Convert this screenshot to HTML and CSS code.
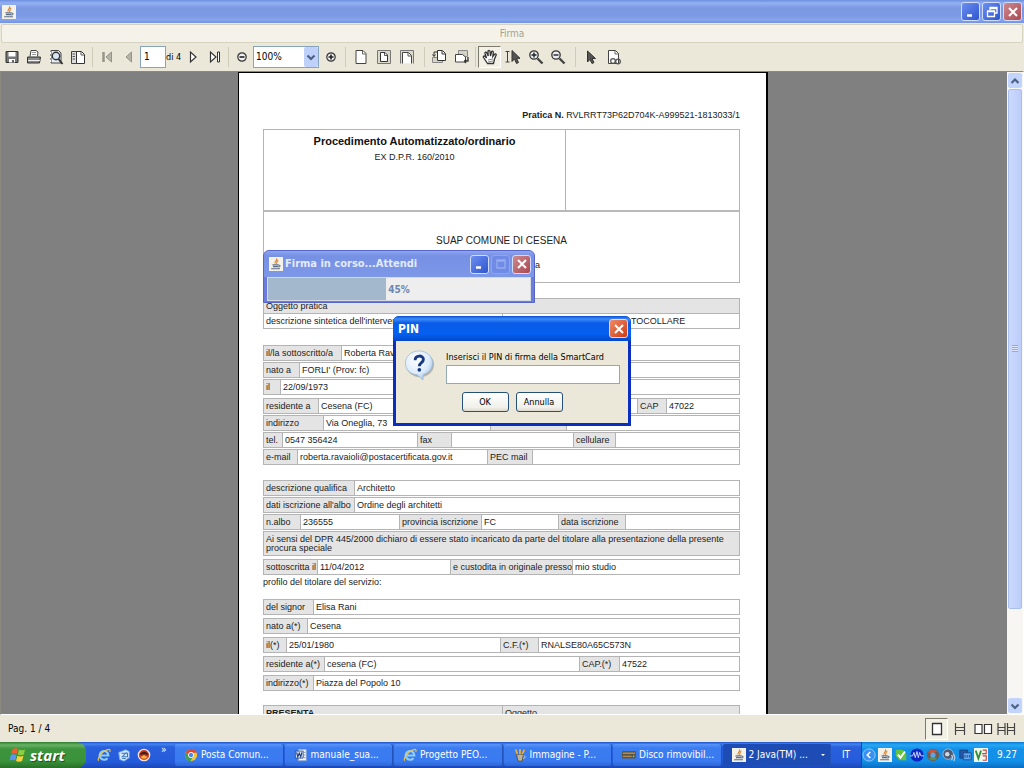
FILE: index.html
```html
<!DOCTYPE html>
<html lang="it">
<head>
<meta charset="utf-8">
<meta name="viewport" content="width=device-width, initial-scale=1">
<title>Firma</title>
<link rel="stylesheet" href="styles.css">
</head>
<body>
<svg class="defs" aria-hidden="true">
  <symbol id="java" viewBox="0 0 16 16"><rect width="16" height="16" fill="#f4f1e8"/><path d="M8.500 1.500C10 4 6 4.500 7 7.500M10.500 3.500C8.500 5 9.500 6 8.500 8" fill="none" stroke="#d98a3a" stroke-width="1.400"/><path d="M4 9h7M4.500 11h6M11 9.500c2.500-.5 2 2-.5 2M2.500 13.500h10" fill="none" stroke="#5d6d86" stroke-width="1.200"/></symbol>
  <symbol id="min" viewBox="0 0 16 16"><path d="M4 11.500h5" stroke="#fff" stroke-width="2.500"/></symbol>
  <symbol id="close" viewBox="0 0 16 16"><path d="M4 4l8 8M12 4l-8 8" stroke="#fff" stroke-width="2"/></symbol>
  <symbol id="up" viewBox="0 0 12 12"><path d="M2.500 8L6 4.500 9.500 8" fill="none" stroke="#4d6185" stroke-width="2.200"/></symbol>
  <symbol id="down" viewBox="0 0 12 12"><path d="M2.500 4.500L6 8l3.500-3.500" fill="none" stroke="#4d6185" stroke-width="2.200"/></symbol>
  <symbol id="ie" viewBox="0 0 16 16"><path d="M12 11.500A5 5 0 1 1 13 8.500H4.500" fill="none" stroke="#8fd0fb" stroke-width="2.400"/><path d="M2 14.500C-.5 12 7 2 14 1.500c1.500.5 1 2 .5 3" fill="none" stroke="#f2c84b" stroke-width="1.300"/></symbol>
</svg>
<div class="desktop">
  <header class="titlebar">
    <svg class="i14"><use href="#java"/></svg>
    <div class="winbtns">
      <button class="wb" aria-label="Riduci"><svg><use href="#min"/></svg></button>
      <button class="wb" aria-label="Ripristina"><svg viewBox="0 0 16 16"><path d="M6 6V3.500h7V9h-2.500M3.500 7h7v5.500h-7zM6 4.500h7M3.500 7.500h7" fill="none" stroke="#fff" stroke-width="1.300"/></svg></button>
      <button class="wb red" aria-label="Chiudi"><svg><use href="#close"/></svg></button>
    </div>
  </header>
  <div class="caption">Firma</div>
  <div class="toolbar">
    <button class="tb" aria-label="Salva"><svg viewBox="0 0 16 16"><path d="M2 2.500h12v11H2z" fill="#777" stroke="#333"/><path d="M4.500 3h7v4.500h-7zM5 10h6v3.500H5z" fill="#fff"/><path d="M9 11v2.500" stroke="#333" stroke-width="1.500"/></svg></button>
    <button class="tb" aria-label="Stampa"><svg viewBox="0 0 16 16"><path d="M4 7.500L5 1.500h5l2 1.500-.5 4.500" fill="#fff" stroke="#444"/><path d="M1.500 8h13l-1 6h-12z" fill="#8b8b8b" stroke="#333"/><path d="M2 11.500h12" stroke="#eee"/><path d="M6 3.500h4M6 5.500h4" stroke="#999"/></svg></button>
    <button class="tb" aria-label="Cerca"><svg viewBox="0 0 16 16"><path d="M3 1.500h7.500L13 4v10H3z" fill="#e7edf5" stroke="#444"/><circle cx="8" cy="7" r="3.700" fill="#d8e6f2" stroke="#333" stroke-width="1.400"/><path d="M10.500 10l4 5" stroke="#333" stroke-width="2"/><path d="M2.500 3v2M2.500 7v2M2.500 11v2" stroke="#fff"/></svg></button>
    <button class="tb" aria-label="Segnalibri"><svg viewBox="0 0 16 16"><path d="M1.500 2.500h5v12h-5z" fill="#ddd" stroke="#444"/><path d="M6.500 2.500h5l3 3v9h-8z" fill="#fff" stroke="#333"/><path d="M11 3v3h3M2.500 5h2.500M2.500 7.500h2.500M2.500 10h2.500" fill="none" stroke="#555"/></svg></button>
    <span class="sep"></span>
    <button class="tb" aria-label="Prima pagina"><svg viewBox="0 0 16 16"><path d="M4.500 3v10" stroke="#979488" stroke-width="2.500"/><path d="M12.500 3v10L7 8z" fill="#b6b3a7" stroke="#979488"/></svg></button>
    <button class="tb" aria-label="Pagina precedente"><svg viewBox="0 0 16 16"><path d="M10.500 3v10L5 8z" fill="#b6b3a7" stroke="#979488"/></svg></button>
    <input class="pageno" id="pageno" type="text" value="1"><label class="of" for="pageno">di 4</label>
    <button class="tb" aria-label="Pagina successiva"><svg viewBox="0 0 16 16"><path d="M5.500 3v10L11 8z" fill="#fff" stroke="#333" stroke-width="1.200"/></svg></button>
    <button class="tb" aria-label="Ultima pagina"><svg viewBox="0 0 16 16"><path d="M3.500 3v10L9 8z" fill="#fff" stroke="#333" stroke-width="1.200"/><path d="M10.500 3h2v10h-2z" fill="#fff" stroke="#333"/></svg></button>
    <span class="sep near"></span>
    <button class="tb" aria-label="Riduci zoom"><svg viewBox="0 0 16 16"><circle cx="8" cy="8" r="4.200" fill="#eee" stroke="#333" stroke-width="1.200"/><path d="M5.500 8h5" stroke="#222" stroke-width="1.600"/></svg></button>
    <span class="zoombox"><select aria-label="Zoom"><option>100%</option></select><span class="arrow"><svg><use href="#down"/></svg></span></span>
    <button class="tb w" aria-label="Aumenta zoom"><svg viewBox="0 0 16 16"><circle cx="8" cy="8" r="4.200" fill="#eee" stroke="#333" stroke-width="1.200"/><path d="M5.500 8h5M8 5.500v5" stroke="#222" stroke-width="1.600"/></svg></button>
    <span class="sep"></span>
    <button class="tb w" aria-label="Dimensione reale"><svg viewBox="0 0 16 16"><path d="M3 1.500h7L13 4.500v10H3z" fill="#fff" stroke="#444"/><path d="M9.500 2v3H13" fill="none" stroke="#666"/></svg></button>
    <button class="tb w" aria-label="Pagina intera"><svg viewBox="0 0 16 16"><path d="M1.500 1.500h13v13h-13z" fill="#ddd9ca" stroke="#777"/><path d="M4.500 3.500h4.500l2.500 2.500v6.500h-7z" fill="#fff" stroke="#333"/><path d="M8.500 4v2.500h3" fill="none" stroke="#555"/></svg></button>
    <button class="tb w" aria-label="Larghezza pagina"><svg viewBox="0 0 16 16"><path d="M1.500 14.500v-13h13v13" fill="#ddd9ca" stroke="#777"/><path d="M3.500 14.500v-11h6l3 3v8" fill="#fff" stroke="#444"/><path d="M9 4v3h3.500" fill="none" stroke="#555"/></svg></button>
    <span class="sep far"></span>
    <button class="tb" aria-label="Ruota a sinistra"><svg viewBox="0 0 16 16"><path d="M1.500 8.500h10v5h-10z" fill="#d5d2c6" stroke="#888"/><path d="M6.500 1.500h5l3 3v7h-8z" fill="#fff" stroke="#333"/><path d="M11 2v3h3M6 3H3v4M1.500 5.500L3 7.500l1.500-2" fill="none" stroke="#333"/></svg></button>
    <button class="tb w" aria-label="Ruota a destra"><svg viewBox="0 0 16 16"><path d="M4.500 1.500h9v6h-9z" fill="#d5d2c6" stroke="#888"/><path d="M1.500 5.500h7l3 2.500v5h-10z" fill="#fff" stroke="#444"/><path d="M14 8v4h-3.500M12 10.500L10.500 12l1.500 2" fill="none" stroke="#333" stroke-width="1.300"/></svg></button>
    <span class="sep near"></span>
    <button class="tb w on" aria-label="Mano"><svg viewBox="0 0 16 16"><path d="M5.500 14.500L1.500 8.500c-.7-1.500 1-2 1.800-.8L4.500 9 3 4.500c-.3-1.500 1.300-1.800 1.800-.5L6.200 7 6 2.500c0-1.500 1.800-1.500 2 0L8.500 7l1-4c.4-1.400 2-1 1.800.4L10.800 7.500l1.700-2.200c1-1 2.200-.2 1.600 1L12.500 10l-1 4.500z" fill="#fff" stroke="#333" stroke-width="1.300"/><path d="M6 11l5-1M6 13l5-1" stroke="#888"/></svg></button>
    <button class="tb w" aria-label="Selezione testo"><svg viewBox="0 0 16 16"><path d="M.5 2.500h4M.5 13h4M2.500 2.500V13" stroke="#444"/><path d="M7 1.500v11l2.500-2.500 2 4.500 2-1-2-4.200H15z" fill="#555" stroke="#333"/></svg></button>
    <button class="tb w" aria-label="Ingrandisci"><svg viewBox="0 0 16 16"><circle cx="6" cy="6" r="4.200" fill="#e8eef2" stroke="#333" stroke-width="1.300"/><path d="M9.500 9.500l5 5" stroke="#444" stroke-width="2.400"/><path d="M3.500 6h5M6 3.500v5" stroke="#222" stroke-width="1.400"/></svg></button>
    <button class="tb" aria-label="Rimpicciolisci"><svg viewBox="0 0 16 16"><circle cx="6" cy="6" r="4.200" fill="#e8eef2" stroke="#333" stroke-width="1.300"/><path d="M9.500 9.500l5 5" stroke="#444" stroke-width="2.400"/><path d="M3.500 6h5" stroke="#222" stroke-width="1.400"/></svg></button>
    <span class="sep far"></span>
    <button class="tb w" aria-label="Seleziona"><svg viewBox="0 0 16 16"><path d="M4.500 2v11l2.500-2.500 2 4 2-1-2-4h3.500z" fill="#555" stroke="#333"/></svg></button>
    <button class="tb w" aria-label="Collegamenti"><svg viewBox="0 0 16 16"><path d="M2.500 1.500h7l3 3v10h-10z" fill="#fff" stroke="#444"/><path d="M9 2v3h3.500" fill="none" stroke="#666"/><circle cx="7" cy="12" r="2.300" fill="none" stroke="#555" stroke-width="1.300"/><circle cx="12" cy="12.500" r="2.300" fill="none" stroke="#555" stroke-width="1.300"/></svg></button>
  </div>

  <div class="viewer">
    <main class="canvas">
      <article class="page">
        <p class="pratica"><b>Pratica N.</b> RVLRRT73P62D704K-A999521-1813033/1</p>
        <div class="head">
          <div class="proc"><h1>Procedimento Automatizzato/ordinario</h1><p>EX D.P.R. 160/2010</p></div>
          <div class="stamp"></div>
        </div>
        <div class="suap"><p>SUAP COMUNE DI CESENA</p><p>Comune di Cesena</p></div>

        <section class="block object">
          <div class="row fill">Oggetto pratica</div>
          <div class="row g-object"><span>descrizione sintetica dell'intervento</span><span class="v proto">DA PROTOCOLLARE</span></div>
        </section>

        <section class="block sub">
          <div class="row g-sub"><span class="l">il/la sottoscritto/a</span><span class="v">Roberta Ravaioli</span></div>
          <div class="row g-born"><span class="l">nato a</span><span class="v">FORLI' (Prov: fc)</span></div>
          <div class="row g-date"><span class="l">il</span><span class="v">22/09/1973</span></div>
          <div class="row g-res"><span class="l">residente a</span><span class="v">Cesena (FC)</span><span class="l">CAP</span><span class="v">47022</span></div>
          <div class="row g-addr"><span class="l">indirizzo</span><span class="v">Via Oneglia, 73</span><span class="l"></span><span class="v"></span></div>
          <div class="row g-tel"><span class="l">tel.</span><span class="v">0547 356424</span><span class="l">fax</span><span class="v"></span><span class="l">cellulare</span><span class="v"></span></div>
          <div class="row g-mail"><span class="l">e-mail</span><span class="v">roberta.ravaioli@postacertificata.gov.it</span><span class="l">PEC mail</span><span class="v"></span></div>
        </section>

        <section class="block qual">
          <div class="row g-qual"><span class="l">descrizione qualifica</span><span class="v">Architetto</span></div>
          <div class="row g-qual"><span class="l">dati iscrizione all'albo</span><span class="v">Ordine degli architetti</span></div>
          <div class="row g-albo"><span class="l">n.albo</span><span class="v">236555</span><span class="l">provincia iscrizione</span><span class="v">FC</span><span class="l">data iscrizione</span><span class="v"></span></div>
          <p class="note">Ai sensi del DPR 445/2000 dichiaro di essere stato incaricato da parte del titolare alla presentazione della presente procura speciale</p>
          <div class="row g-sign"><span class="l">sottoscritta il</span><span class="v">11/04/2012</span><span class="l">e custodita in originale presso</span><span class="v">mio studio</span></div>
          <p class="profile">profilo del titolare del servizio:</p>
        </section>

        <section class="block holder">
          <div class="row g-holder"><span class="l">del signor</span><span class="v">Elisa Rani</span></div>
          <div class="row g-hborn"><span class="l">nato a(*)</span><span class="v">Cesena</span></div>
          <div class="row g-hdate"><span class="l">il(*)</span><span class="v">25/01/1980</span><span class="l">C.F.(*)</span><span class="v">RNALSE80A65C573N</span></div>
          <div class="row g-hres"><span class="l">residente a(*)</span><span class="v">cesena (FC)</span><span class="l">CAP.(*)</span><span class="v">47522</span></div>
          <div class="row g-holder"><span class="l">indirizzo(*)</span><span class="v">Piazza del Popolo 10</span></div>
        </section>

        <section class="block present">
          <div class="row fill g-object"><b>PRESENTA</b><span class="v">Oggetto</span></div>
        </section>
      </article>
    </main>
    <div class="scroll">
      <button class="sb" aria-label="Scorri su"><svg><use href="#up"/></svg></button>
      <div class="thumb"><i></i></div>
      <div class="track"></div>
      <button class="sb" aria-label="Scorri giù"><svg><use href="#down"/></svg></button>
    </div>
  </div>

  <footer class="status">
    <span>Pag. 1 / 4</span>
    <div class="modes">
      <button class="tb w on" aria-label="Pagina singola"><svg viewBox="0 0 16 16"><path d="M3.500 2.500h9v11h-9z" fill="#fff" stroke="#333" stroke-width="1.300"/></svg></button>
      <button class="tb w" aria-label="Continua"><svg viewBox="0 0 16 16"><path d="M3.500 2v4.500h9V2M3.500 14V9.500h9V14M3.500 6.500v3M12.500 6.500v3" fill="none" stroke="#444" stroke-width="1.200"/></svg></button>
      <button class="tb w" aria-label="Pagine affiancate"><svg class="wide" viewBox="0 0 20 16"><path d="M2 3.500h7v9H2zM11.500 3.500h7v9h-7z" fill="#fff" stroke="#333" stroke-width="1.200"/></svg></button>
      <button class="tb w" aria-label="Affiancate continua"><svg class="wide" viewBox="0 0 20 16"><path d="M2 2v12M9 2v12M11.500 2v12M18.500 2v12M2 6.500h7M2 9.500h7M11.500 6.500h7M11.500 9.500h7" fill="none" stroke="#444" stroke-width="1.200"/></svg></button>
    </div>
  </footer>

  <section class="win progress" aria-label="Firma in corso">
    <header><svg class="i14"><use href="#java"/></svg><h2>Firma in corso...Attendi</h2>
      <button class="wb" aria-label="Riduci"><svg><use href="#min"/></svg></button>
      <button class="wb off" aria-label="Ingrandisci" disabled><svg viewBox="0 0 16 16"><path d="M4 4h8v8H4zM4 5h8" fill="none" stroke="#98acef" stroke-width="1.300"/></svg></button>
      <button class="wb red" aria-label="Chiudi"><svg><use href="#close"/></svg></button>
    </header>
    <div class="bar"><div class="done" style="width:45%"></div><span>45%</span></div>
  </section>

  <section class="win pin" role="dialog" aria-label="PIN">
    <header><h2>PIN</h2><button class="wb red" aria-label="Chiudi"><svg><use href="#close"/></svg></button></header>
    <form class="ask">
      <svg class="bubble" viewBox="0 0 32 32"><defs><radialGradient id="bg" cx=".4" cy=".3" r=".8"><stop offset="0" stop-color="#fff"/><stop offset=".6" stop-color="#dcebfb"/><stop offset="1" stop-color="#8fb4e0"/></radialGradient></defs><ellipse cx="16.500" cy="15" rx="14.500" ry="13" fill="#b5b3a8"/><path d="M15.500 1C23.500 1 29.500 6.500 29.500 13.500c0 6-4 10.500-9.500 11.700L19.500 31l-6-5.500C6 25 1.500 20 1.500 13.500 1.500 6.500 7.500 1 15.500 1z" fill="url(#bg)" stroke="#9db9dc" stroke-width=".8"/><path d="M11.500 10.500c0-5.500 8.500-5.500 8.500-.8 0 3.300-4.200 3.300-4.200 7" fill="none" stroke="#173a80" stroke-width="3"/><circle cx="15.800" cy="20.500" r="1.900" fill="#173a80"/></svg>
      <div class="field"><label for="pin">Inserisci il PIN di firma della SmartCard</label><input id="pin" type="password"></div>
      <div class="actions"><button type="button">OK</button><button type="button">Annulla</button></div>
    </form>
  </section>
</div>

<nav class="taskbar">
  <button class="start"><svg viewBox="0 0 18 16"><path d="M3.500 2.500q3-2 5.500-.5L7.800 7Q5 5.500 2 7z" fill="#f0602f"/><path d="M10 2.500q3 1.500 6 0L14.800 7.500q-3 1.500-6 0z" fill="#8cce3f"/><path d="M1.700 8.200q3-1.700 5.800 0L6.200 13.500q-3-1.500-5.700.2z" fill="#5f95f2"/><path d="M8.500 8.700q3 1.500 6 0L13 14q-3 1.500-6 0z" fill="#fbd03d"/></svg>start</button>
  <div class="quick">
    <button aria-label="Internet Explorer"><svg><use href="#ie"/></svg></button>
    <button aria-label="Desktop"><svg viewBox="0 0 16 16"><path d="M2 5l8-3 4 2v7l-6 4-5-2z" fill="#d9e9fa" stroke="#6fa8e8"/><path d="M5 6h7v4H6l5-5M6 12h4" fill="none" stroke="#3f77bf" stroke-width="1.200"/></svg></button>
    <button aria-label="Browser"><svg viewBox="0 0 16 16"><circle cx="8" cy="8" r="6.500" fill="#d33a1c" stroke="#f2e2dc" stroke-width="1.500"/><path d="M3 7q5-6 10 0l-1.500 1q-3.500-2-7 0z" fill="#3b2320"/><path d="M4 10.500q4 3.500 8 0L8 8z" fill="#f7b13c"/></svg></button>
  </div>
  <span class="more">»</span>
  <div class="tasks">
    <button><svg viewBox="0 0 16 16"><circle cx="8" cy="8" r="7" fill="#f0c53b"/><path d="M2 4.500a7 7 0 0 1 12.500 1H8L5 9z" fill="#dc4636"/><path d="M2 4.500A7 7 0 0 0 7.500 15L10 10l-4 0z" fill="#3f9f4f"/><circle cx="8" cy="8" r="3" fill="#4b86e8" stroke="#fff"/></svg><span>Posta Comun...</span></button>
    <button><svg viewBox="0 0 16 16"><path d="M5 1.500h9v13H5z" fill="#f4f7fc" stroke="#8da6cf"/><path d="M1.500 3.500h9v8h-9z" fill="#dbe6f7" stroke="#2c4b8d"/><path d="M3 5l1.300 5L6 6l1.700 4L9 5" fill="none" stroke="#1e3b7a" stroke-width="1.300"/><path d="M11.500 5H13M11.500 8H13M11.500 11H13" stroke="#6a83b0"/></svg><span>manuale_sua...</span></button>
    <button><svg><use href="#ie"/></svg><span>Progetto PEO...</span></button>
    <button><svg viewBox="0 0 16 16"><path d="M4 7h8l-1.500 8H5.500z" fill="#b6b5a1" stroke="#524937"/><path d="M5 7L3 1.500M8 7V1M10.500 7L13 2" stroke="#e7ae3d" stroke-width="2"/><path d="M12 9c3 0 2 3-.5 3" fill="none" stroke="#ddd"/></svg><span>Immagine - P...</span></button>
    <button><svg viewBox="0 0 16 16"><rect x="0" y="3.500" width="16" height="8.500" rx="1" fill="#5a5648"/><path d="M1 6h14M1 9.500h10" stroke="#b08a50" stroke-width="1.500"/><path d="M12.500 9.500H14" stroke="#6f6" stroke-width="1.500"/></svg><span>Disco rimovibil...</span></button>
    <button class="cur"><svg><use href="#java"/></svg><span>2 Java(TM) ...</span><i></i></button>
  </div>
  <span class="lang">IT</span>
  <div class="tray">
    <button class="hide" aria-label="Nascondi icone"><svg viewBox="0 0 16 16"><circle cx="8" cy="8" r="7" fill="#3b8ff2" stroke="#9bd0fb"/><path d="M9.500 4.500L6 8l3.500 3.500" fill="none" stroke="#fff" stroke-width="1.800"/></svg></button>
    <svg><use href="#java"/></svg>
    <svg viewBox="0 0 16 16"><path d="M2 2h8l4 5v7H6L2 9z" fill="#63c23e"/><path d="M4.500 7.500L7.500 11l5-7" fill="none" stroke="#fff" stroke-width="2.200"/></svg>
    <svg viewBox="0 0 16 16"><circle cx="8" cy="8" r="7.500" fill="#0a25c4"/><path d="M0 9h3l1.500-4L6 11l2-7 1.500 7L11 5l1.500 4H16" fill="none" stroke="#dbe6ff"/></svg>
    <svg viewBox="0 0 16 16"><circle cx="8" cy="8" r="7" fill="#6e5a52"/><path d="M2 5a7 7 0 0 1 11-1L8 6z" fill="#ca553b"/><path d="M3 12a7 7 0 0 0 10 0l-5-2z" fill="#5d8f4f"/><circle cx="8" cy="8" r="3" fill="#57a7e8"/></svg>
    <svg viewBox="0 0 16 16"><circle cx="7" cy="7" r="6" fill="#4e5d74" stroke="#a9b8c9"/><circle cx="6" cy="7" r="2.500" fill="#d0d8e2"/><path d="M11 8q2 3 0 6M13.500 7q2.500 4 0 8" fill="none" stroke="#e8eef5"/></svg>
    <svg viewBox="0 0 16 16"><path d="M2 2.500h9v9H2z" fill="#2458a8" stroke="#173a74"/><path d="M6 5.500h9v8H6z" fill="#68aaf2" stroke="#1c4384"/><path d="M8 8v3M10.500 8v3M13 8v3" stroke="#173a74"/></svg>
    <svg viewBox="0 0 16 16"><rect width="16" height="16" fill="#f2f7ee"/><path d="M2 3l3 9 3-9" fill="none" stroke="#2e8c35" stroke-width="2"/><path d="M10 2.500h4v4h-4v1M10 9h4v5h-4" fill="none" stroke="#c3473b" stroke-width="1.300"/></svg>
    <time>9.27</time>
  </div>
</nav>
</body>
</html>
```
FILE: styles.css
```css
* { box-sizing: border-box; }
html, body { height: 100%; }
body {
  margin: 0;
  display: flex;
  flex-direction: column;
  overflow: hidden;
  background: #ece9d8;
  color: #000;
  font: 9px/12px "DejaVu Sans Condensed", "DejaVu Sans", sans-serif;
}
h1, h2, p { margin: 0; }
button, input, select { font: inherit; color: inherit; margin: 0; padding: 0; }
button { border: 0; background: none; display: flex; align-items: center; justify-content: center; flex: none; }
svg { display: block; flex: none; }
.defs { position: absolute; width: 0; height: 0; }
.i14 { width: 14px; height: 14px; }

.desktop { position: relative; flex: 1; min-height: 0; display: flex; flex-direction: column; }

/* main window */
.titlebar {
  flex: none;
  height: 23px;
  display: flex;
  align-items: center;
  justify-content: space-between;
  padding: 0 2px;
  background: linear-gradient(#6d8fe0, #93b0f1 3px, #7b99e3 8px, #7c9ae4 16px, #86a5ec 20px, #7291df);
}
.winbtns { display: flex; gap: 2px; }
.wb {
  width: 19px;
  height: 19px;
  border: 1px solid #cfdcfa;
  border-radius: 3px;
  background: linear-gradient(135deg, #6b8ff0, #2f55cf);
}
.wb svg { width: 16px; height: 16px; }
.wb.red { background: linear-gradient(135deg, #cf8a8e, #a94852); }
.wb.off { background: #708be6; border-color: #8ea5ee; }
.caption {
  flex: none;
  height: 19px;
  margin: 1px;
  border: 1px solid #d6d2c0;
  border-radius: 2px;
  background: #f5f3e9;
  color: #a5a294;
  font-size: 10px;
  line-height: 17px;
  text-align: center;
}
.toolbar { flex: none; height: 27px; display: flex; align-items: center; padding: 0 0 2px 1px; background: #ece8d9; }
.tb { width: 22px; height: 22px; }
.tb svg { width: 16px; height: 16px; }
.tb svg.wide { width: 20px; }
.tb.w { width: 23px; }
.on { border: 1px solid; border-color: #7b786c #fff #fff #7b786c; background: #f3f0e6; }
.sep { width: 1px; height: 20px; margin: 0 3px; background: #cfcbb9; }
.sep.far { margin-left: 6px; }
.sep.near { margin: 0 2px; }
.pageno { width: 26px; height: 22px; border: 1px solid #86a4c0; padding-left: 3px; background: #fff; font-size: 10px; }
.of { width: 16px; white-space: nowrap; }
.zoombox { position: relative; width: 66px; height: 22px; }
.zoombox select { appearance: none; width: 100%; height: 100%; border: 1px solid #86a4c0; border-radius: 0; background: #fff; padding-left: 2px; font-size: 10px; }
.arrow { position: absolute; top: 1px; right: 1px; bottom: 1px; width: 14px; display: flex; align-items: center; justify-content: center; border-radius: 2px; background: #bfd1fb; pointer-events: none; }
.arrow svg, .sb svg { width: 12px; height: 12px; }

/* document viewer */
.viewer { flex: 1; min-height: 0; display: flex; border: 1px solid #8a897f; border-right-color: #fff; border-bottom: 1px solid #fff; }
.canvas { flex: 1; min-width: 0; overflow: hidden; padding-right: 2px; background: #808080; }
.page {
  width: 530px;
  min-height: 100%;
  margin: 0 auto;
  padding: 35px 26px 0 24px;
  border: 1px solid #000;
  border-right-width: 2px;
  background: #fff;
  color: #222;
  font: 9px/12px "Liberation Sans", Arial, sans-serif;
}
.pratica { text-align: right; line-height: 14px; }
.head { display: grid; grid-template-columns: 302px 1fr; height: 83px; margin-top: 7px; border: 1px solid #b4b4b4; border-bottom: 2px solid #b9b9b9; text-align: center; }
.proc { border-right: 1px solid #b4b4b4; padding-top: 4px; }
.proc h1 { font-size: 11px; line-height: 15px; color: #111; }
.proc p { line-height: 16px; }
.suap { height: 71px; border: 1px solid #b4b4b4; border-top: 0; padding-top: 17px; text-align: center; font-size: 10px; line-height: 24px; }
.suap p + p { font-size: 9px; }
.block { display: flex; flex-direction: column; gap: 1px; }
.object { margin-top: 15px; gap: 0; }
.sub { margin-top: 16px; }
.qual { margin-top: 15px; }
.holder { margin-top: 11px; gap: 3px; }
.present { margin-top: 14px; }
.row { display: grid; height: 16px; border: 1px solid #b4b4b4; line-height: 14px; white-space: nowrap; }
.row.fill, .note { background: #e4e4e4; padding-left: 2px; }
.object .row + .row { border-top: 0; height: 15px; }
.object .g-object { padding-left: 2px; }
.row > * { overflow: hidden; }
.l { background: #e4e4e4; padding-left: 2px; }
.v { border-left: 1px solid #b4b4b4; padding-left: 2px; }
.v + .l { border-left: 1px solid #b4b4b4; }
.v.proto { padding-left: 94px; }
.g-object { grid-template-columns: 236px 1fr; }
.g-sub { grid-template-columns: 77px 1fr; }
.g-born { grid-template-columns: 35px 1fr; }
.g-date { grid-template-columns: 16px 1fr; }
.g-res { grid-template-columns: 54px 1fr 29px 73px; margin-top: 2px; }
.g-addr { grid-template-columns: 59px 1fr 76px 173px; }
.g-tel { grid-template-columns: 18px 1fr 34px 122px 42px 124px; }
.g-mail { grid-template-columns: 33px 1fr 45px 207px; }
.g-qual { grid-template-columns: 90px 1fr; }
.g-albo { grid-template-columns: 36px 1fr 82px 77px 67px 114px; }
.g-sign { grid-template-columns: 53px 1fr 122px 167px; margin-top: 2px; }
.g-holder { grid-template-columns: 49px 1fr; }
.g-hborn { grid-template-columns: 43px 1fr; }
.g-hdate { grid-template-columns: 22px 1fr 38px 201px; }
.g-hres { grid-template-columns: 60px 1fr 40px 120px; }
.note { border: 1px solid #b4b4b4; line-height: 9px; padding: 3px 4px 3px 2px; height: 25px; }
.profile { line-height: 12px; }

.scroll { width: 16px; flex: none; display: flex; flex-direction: column; padding: 1px; background: #f7f6f2; }
.sb { width: 14px; height: 15px; border-radius: 2px; background: #c3d4fc; }
.thumb { flex: 522; display: flex; align-items: center; justify-content: center; margin: 1px 0; border: 1px solid #a9bff2; border-radius: 2px; background: linear-gradient(90deg, #cbd9fe, #bccdfa); }
.thumb i { width: 6px; height: 7px; background: repeating-linear-gradient(#8fa9e6 0 1px, #dfe8ff 1px 2px); }
.track { flex: 89; }

.status { flex: none; height: 27px; display: flex; align-items: center; justify-content: space-between; padding: 0 7px 0 8px; background: #ece8d9; font-size: 10px; }
.modes { display: flex; }

/* floating windows */
.win { position: absolute; border-radius: 6px 6px 0 0; }
.win header { display: flex; align-items: center; gap: 2px; }
.win h2 { flex: 1; color: #fff; font-size: 12px; line-height: 16px; }
.progress { left: 263px; top: 250px; width: 272px; padding: 0 3px 1px; background: #6c7cdc; border: 1px solid #5565c8; }
.progress header { height: 26px; margin: 0 -3px; padding: 0 3px 0 5px; border-radius: 5px 5px 0 0; background: linear-gradient(#8ea5ef, #7690e4 5px, #7d98e8); }
.progress h2 { color: #e3eafc; font-size: 11px; }
.bar { position: relative; height: 24px; background: #eee; border: 1px solid #d5dbe5; }
.done { height: 100%; background: #a3b8cc; }
.bar span { position: absolute; inset: 0; text-align: center; line-height: 23px; color: #6d86ae; font-size: 10px; font-weight: bold; }
.pin { left: 50%; top: 50%; transform: translate(-50%, -50%); width: 238px; padding: 0 3px 3px; background: #0a2fc0; }
.pin header { height: 25px; margin: 0 -3px; padding: 0 3px 0 5px; border-radius: 6px 6px 0 0; background: linear-gradient(#0a4fd0, #3c8cfb 3px, #0a5be8 7px, #0560f0 18px, #0448c8); }
.pin .red { background: linear-gradient(135deg, #f08a68, #cc3d14); }
.ask { display: grid; grid-template-columns: 34px 1fr; column-gap: 7px; padding: 9px 8px 11px 8px; background: #ece8d9; }
.bubble { width: 31px; height: 31px; }
.field { display: flex; flex-direction: column; gap: 2px; padding: 1px 0 0 1px; }
.field label { white-space: nowrap; }
.field input { height: 19px; border: 1px solid #93a9bb; background: #fff; }
.actions { grid-column: 1 / -1; display: flex; gap: 7px; justify-content: center; padding-top: 8px; }
.actions button { width: 47px; height: 20px; border: 1px solid #24507a; border-radius: 3px; background: linear-gradient(#fff, #f1f0ea 80%, #dcd8cc); }

/* taskbar */
.taskbar { flex: none; height: 26px; display: flex; align-items: stretch; background: linear-gradient(#1c4fc4, #4285f0 2px, #2a60dc 5px, #245bdb 20px, #1c47b4); color: #fff; font-size: 10px; }
.taskbar svg { width: 14px; height: 14px; }
.start { width: 86px; justify-content: flex-start; gap: 3px; padding-left: 9px; border-radius: 0 9px 9px 0; background: linear-gradient(#2e7c2e, #68b266 3px, #3c943c 7px, #3a933a 19px, #286f28); color: #fff; font: italic bold 15px/20px "Open Sans", sans-serif; text-shadow: 1px 1px 1px #1c4f1c; }
.start svg { width: 18px; height: 16px; }
.quick { display: flex; align-items: center; gap: 6px; padding-left: 11px; }
.more { width: 24px; padding: 2px 0 0 10px; }
.tasks { flex: 1; display: grid; grid-template-columns: repeat(6, 1fr); gap: 1px; padding: 2px 0; min-width: 0; }
.tasks button { justify-content: flex-start; gap: 3px; padding-left: 9px; border-radius: 2px; background: linear-gradient(#5a96f8, #3b7cf0 4px, #3a7af0 17px, #2d66d8); box-shadow: inset -1px 0 #2352b8; min-width: 0; }
.tasks span { white-space: nowrap; overflow: hidden; }
.tasks button.cur { background: #1d4cb4; }
.cur i { margin-left: auto; margin-right: 6px; border: 2px solid transparent; border-top-color: #fff; border-bottom: 0; }
.lang { width: 30px; text-align: center; align-self: center; }
.tray { width: 163px; display: flex; align-items: center; gap: 2px; background: linear-gradient(#0d78d4, #26a8f4 3px, #1490e8 7px, #1290e8 19px, #0c6cc0); border-left: 1px solid #0b4fa6; }
.tray time { flex: 1; text-align: center; }
```
